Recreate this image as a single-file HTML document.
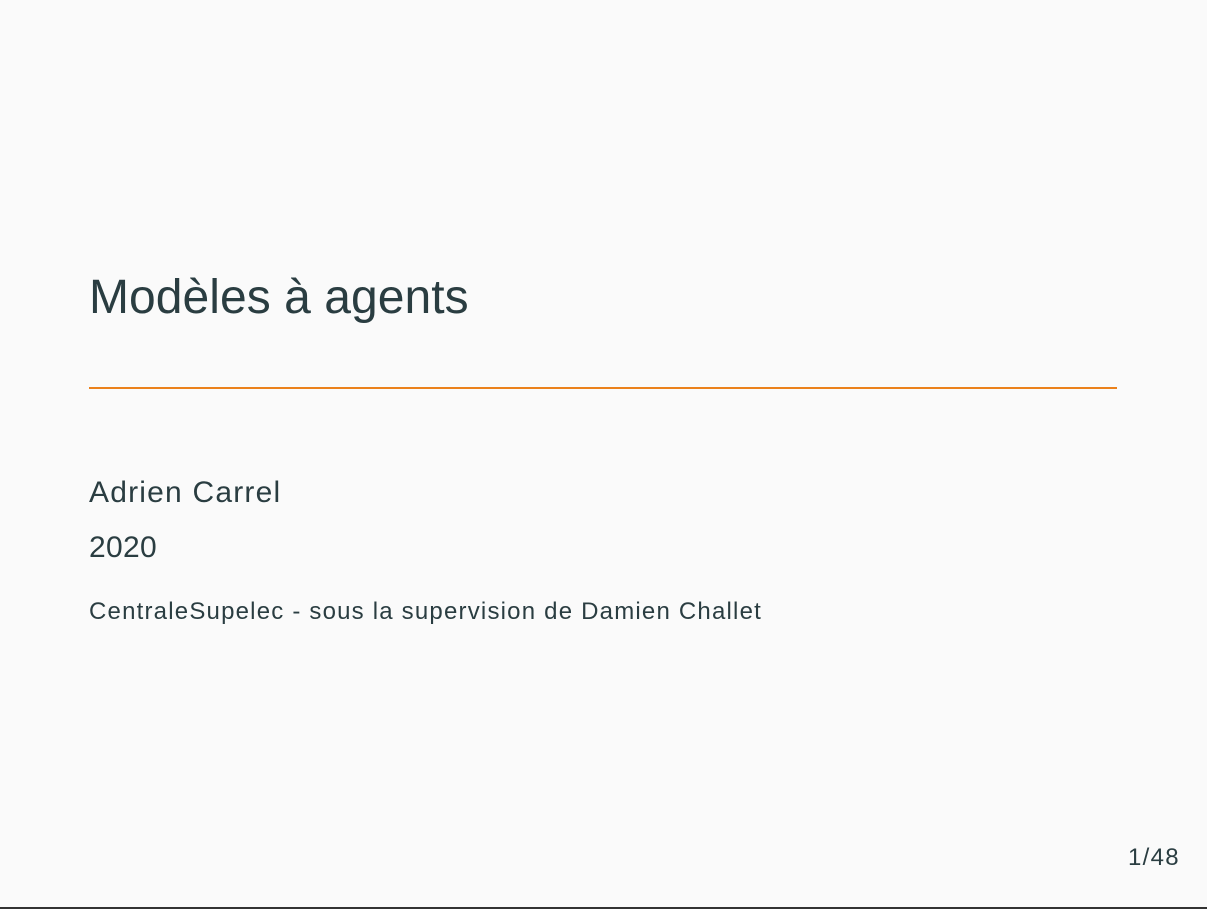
<!DOCTYPE html>
<html><head><meta charset="utf-8"><style>
html,body{margin:0;padding:0}
body{width:1207px;height:909px;background:#fafafa;position:relative;overflow:hidden;font-family:"Liberation Sans",sans-serif;color:#2a3d41}
.t{position:absolute;white-space:nowrap;line-height:1}
</style></head><body>
<div class="t" style="left:89px;top:274px;font-size:48px;letter-spacing:0.05px">Modèles à agents</div>
<div style="position:absolute;left:89px;top:387px;width:1028px;height:2px;background:#eb811b"></div>
<div class="t" style="left:89px;top:478px;font-size:30px;letter-spacing:1.2px">Adrien Carrel</div>
<div class="t" style="left:89px;top:533px;font-size:30px;letter-spacing:0.3px">2020</div>
<div class="t" style="left:89px;top:600px;font-size:24px;letter-spacing:1.2px">CentraleSupelec - sous la supervision de Damien Challet</div>
<div class="t" style="left:1128px;top:846px;font-size:24px;letter-spacing:1.3px">1/48</div>
<div style="position:absolute;left:0;top:907px;width:1207px;height:2px;background:#333"></div>
</body></html>
